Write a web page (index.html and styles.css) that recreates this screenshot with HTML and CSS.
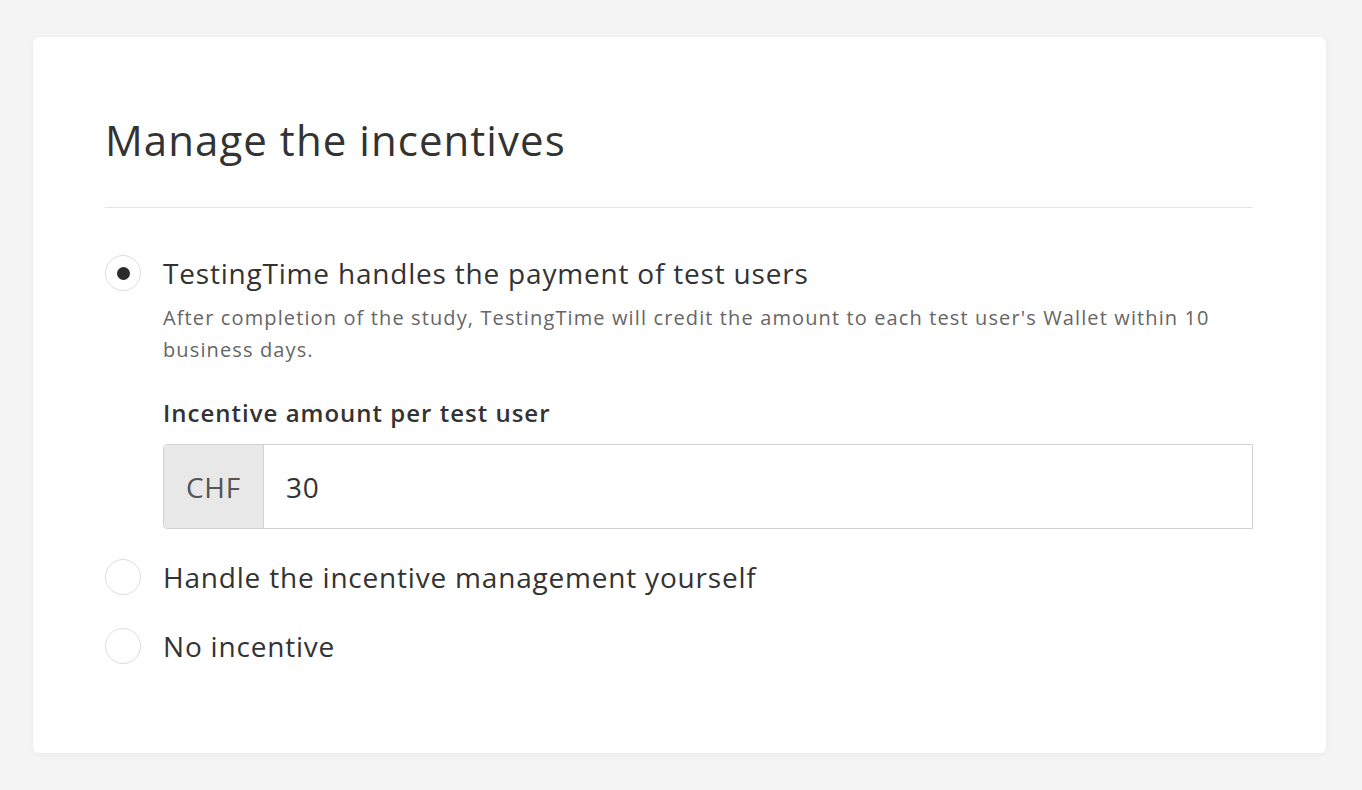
FILE: index.html
```html
<!DOCTYPE html>
<html>
<head>
<meta charset="utf-8">
<link rel="stylesheet" href="styles.css">
</head>
<body>
<div class="page">
  <div class="card">
    <h1 class="title">Manage the incentives</h1>
    <hr class="divider">
    <div class="options">
      <div class="option">
        <span class="radio checked"><span class="dot"></span></span>
        <div class="option-body">
          <div class="option-label">TestingTime handles the payment of test users</div>
          <p class="option-desc">After completion of the study, TestingTime will credit the amount to each test user's Wallet within 10 business days.</p>
          <div class="field-label">Incentive amount per test user</div>
          <div class="input-group">
            <span class="addon">CHF</span>
            <span class="input-value">30</span>
          </div>
        </div>
      </div>
      <div class="option">
        <span class="radio"></span>
        <div class="option-body">
          <div class="option-label">Handle the incentive management yourself</div>
        </div>
      </div>
      <div class="option">
        <span class="radio"></span>
        <div class="option-body">
          <div class="option-label">No incentive</div>
        </div>
      </div>
    </div>
  </div>
</div>
</body>
</html>
```
FILE: styles.css
```css
html, body {
  margin: 0;
  padding: 0;
  background: #f4f4f4;
  font-family: "Open Sans", "Noto Sans", sans-serif;
  color: #333;
}
.page {
  padding: 37px 36px 37px 33px;
}
.card {
  background: #fff;
  border-radius: 6px;
  box-shadow: 0 1px 6px rgba(0,0,0,0.05);
  padding: 89px 73px 89px 72px;
}
.title {
  margin: 0;
  font-size: 42px;
  letter-spacing: 1.05px;
  font-weight: 400;
  line-height: 52px;
  color: #333;
  margin-top: -12px;
}
.divider {
  border: none;
  border-top: 1px solid #e4e4e4;
  margin: 41px 0 0 0;
}
.options {
  display: flex;
  flex-direction: column;
  gap: 33px;
  margin-top: 47px;
}
.option {
  display: flex;
  gap: 22px;
  align-items: flex-start;
}
.radio {
  flex: none;
  width: 36px;
  height: 36px;
  border: 1px solid #dcdcdc;
  border-radius: 50%;
  display: flex;
  align-items: center;
  justify-content: center;
  box-sizing: border-box;
}
.dot {
  width: 13px;
  height: 13px;
  border-radius: 50%;
  background: #2b2b2b;
}
.option-body {
  flex: 1;
}
.option-label {
  font-size: 28px;
  letter-spacing: 0.8px;
  line-height: 36px;
  color: #333;
}
.option-desc {
  margin: 11px 0 0 0;
  font-size: 20px;
  letter-spacing: 1.12px;
  line-height: 32px;
  color: #666;
}
.field-label {
  margin-top: 31px;
  font-size: 24px;
  letter-spacing: 1px;
  font-weight: 600;
  line-height: 32px;
  color: #333;
}
.input-group {
  display: flex;
  margin-top: 15px;
  margin-bottom: -3px;
  height: 85px;
  border: 1px solid #d2d2d2;
  border-radius: 4px 0 0 4px;
  box-sizing: border-box;
}
.addon {
  width: 99px;
  background: #e8e8e8;
  border-right: 1px solid #d2d2d2;
  display: flex;
  align-items: center;
  justify-content: center;
  font-size: 28px;
  letter-spacing: 0.8px;
  color: #555;
  border-radius: 3px 0 0 3px;
}
.input-value {
  display: flex;
  align-items: center;
  padding-left: 22px;
  font-size: 28px;
  letter-spacing: 0.8px;
  color: #333;
}
```
